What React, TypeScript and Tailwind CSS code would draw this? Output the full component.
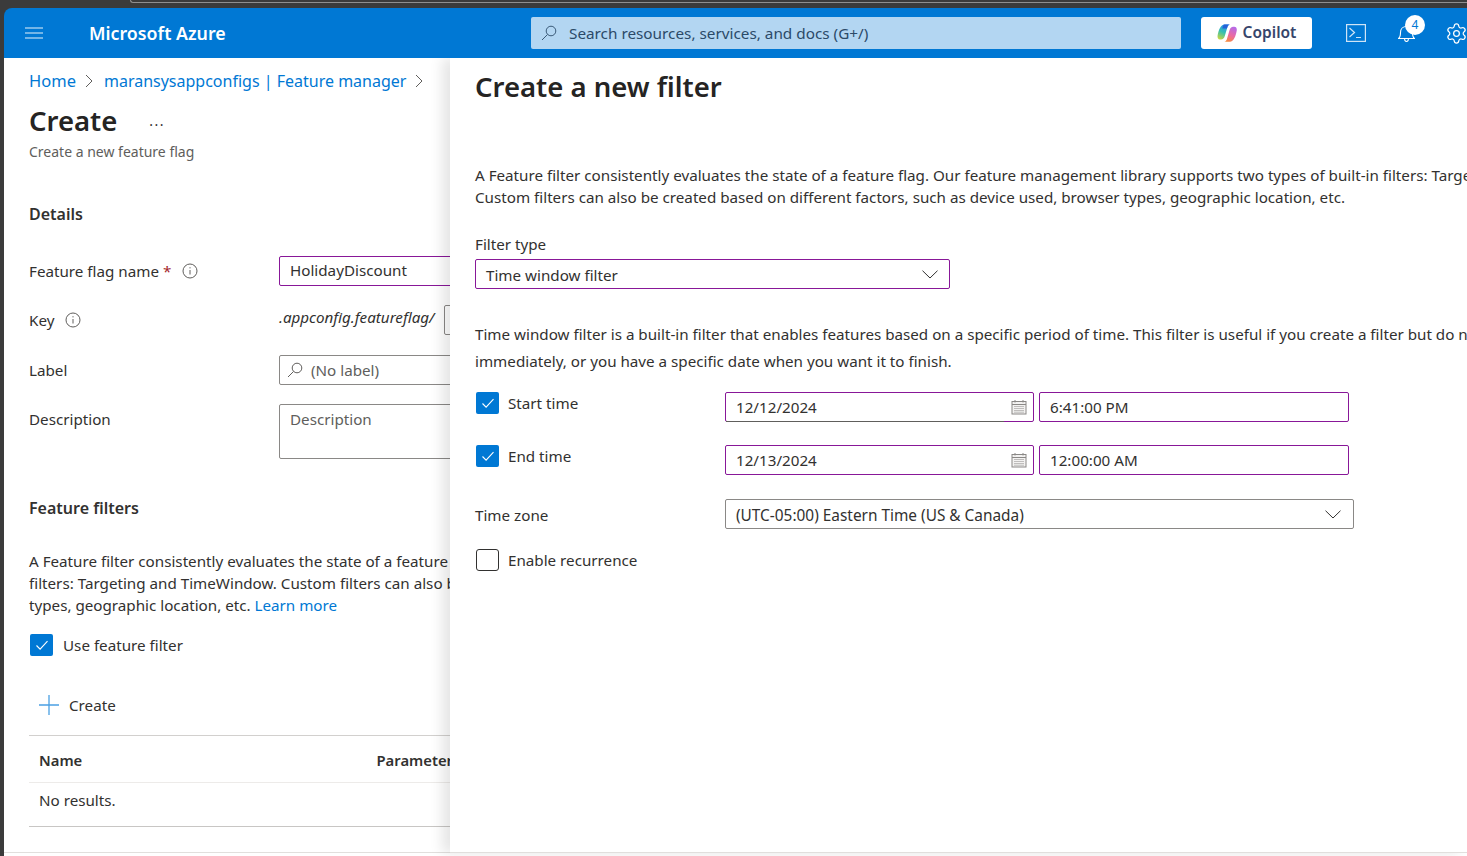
import React from "react";
import { Settings } from "lucide-react";

const Check = () => (
  <svg viewBox="0 0 16 16" className="w-[16px] h-[16px]" fill="none" stroke="#ffffff" strokeWidth="1.100">
    <path d="M2.500 8.500l3.600 3.600 7.400-8" />
  </svg>
);

const CheckBox = ({ checked = true }: { checked?: boolean }) => (
  <div
    className={
      checked
        ? "w-[23px] h-[22px] rounded-[2px] bg-[#0078d4] flex items-center justify-center shrink-0"
        : "w-[23px] h-[22px] rounded-[3px] border border-[#323130] bg-white shrink-0"
    }
  >
    {checked && <Check />}
  </div>
);

const Info = () => (
  <svg viewBox="0 0 16 16" className="w-[16px] h-[16px] shrink-0" fill="none" stroke="#605e5c" strokeWidth="1">
    <circle cx="8" cy="8" r="7" />
    <path d="M8 7v4.500M8 4.200v1.200" />
  </svg>
);

const Chevron = () => (
  <svg viewBox="0 0 16 9" className="w-[16px] h-[9px] shrink-0" fill="none" stroke="#323130" strokeWidth="1">
    <path d="M.5 .7L8 8l7.500-7.300" />
  </svg>
);

const Crumb = () => (
  <svg viewBox="0 0 8 14" className="w-[8px] h-[14px] shrink-0" fill="none" stroke="#605e5c" strokeWidth="1">
    <path d="M1 1l6 6-6 6" />
  </svg>
);

const Calendar = () => (
  <svg viewBox="0 0 16 16" className="w-[16px] h-[16px] shrink-0" fill="none" stroke="#8a8886" strokeWidth="1">
    <rect x="1" y="2.500" width="14" height="12.500" fill="#f3f2f1" />
    <path d="M1 5.500h14M4 1v2.500M12 1v2.500" />
    <path d="M3.500 7.500h9M3.500 9.500h9M3.500 11.500h9M3.500 13.200h9" strokeDasharray="1 1" />
  </svg>
);

const Row = ({ children, className }: { children: React.ReactNode; className: string }) => (
  <div className={"flex items-center whitespace-nowrap " + className}>{children}</div>
);

const Copilot = () => (
  <svg viewBox="0 0 20 20" className="w-[20px] h-[20px] shrink-0">
    <defs>
      <linearGradient id="cpa" x1="0.6" y1="0" x2="0.2" y2="1">
        <stop offset="0" stopColor="#2b8ff0" />
        <stop offset="0.5" stopColor="#35c0b0" />
        <stop offset="1" stopColor="#c8d63f" />
      </linearGradient>
      <linearGradient id="cpb" x1="0.7" y1="0" x2="0.3" y2="1">
        <stop offset="0" stopColor="#b56ae8" />
        <stop offset="0.55" stopColor="#ec6aa0" />
        <stop offset="1" stopColor="#f58a3c" />
      </linearGradient>
    </defs>
    <path d="M7.500 1.500H13c-1.500.3-2.200 1.300-2.700 3L7.800 13c-.7 2.200-1.800 3.500-3.800 3.500H3C1 16.500 .2 14.800.6 12.500 1.500 7 3.800 1.500 7.500 1.500z" fill="url(#cpa)" />
    <path d="M12.500 18.800H7.300c1.500-.3 2.200-1.300 2.700-3l2.500-8.500c.7-2.200 1.800-3.500 3.800-3.500h1c2 0 2.800 1.700 2.400 4-.9 5.500-3.200 11-6.700 11z" fill="url(#cpb)" />
    <path d="M7.500 1.500H13c-1.500.3-2.200 1.300-2.700 3l-.3 1H5.300c.5-2.200 1-4 2.200-4z" fill="#2563d8" />
  </svg>
);

export default function App() {
  return (
    <div
      className="w-[1467px] h-[856px] overflow-hidden bg-[#3b3b3b] pl-[4px] flex flex-col text-[15.2px] text-[#323130]"
      style={{ fontFamily: '"Noto Sans", "Open Sans", sans-serif' }}
    >
      <div className="h-[8px] shrink-0 pl-[126px]">
        <div className="h-[3px] border-b border-l border-[#8f8f8f] rounded-bl-[4px]" />
      </div>
      <header className="h-[50px] shrink-0 bg-[#0078d4] rounded-tl-[8px] flex items-center text-white overflow-hidden">
        <svg viewBox="0 0 18 12" className="w-[18px] h-[12px] ml-[21px] shrink-0" fill="none" stroke="#e6f1fa" strokeWidth="1.200">
          <path d="M0 1h18M0 6h18M0 11h18" />
        </svg>
        <div className="ml-[46px] w-[442px] shrink-0 text-[17.800px] font-semibold">Microsoft Azure</div>
        <div className="w-[650px] h-[32px] bg-[#b3d6f2] rounded-[2px] flex items-center pl-[10px] text-[#2b4a68] shrink-0">
          <svg viewBox="0 0 16 16" className="w-[16px] h-[16px] shrink-0" fill="none" stroke="#3a5a78" strokeWidth="1">
            <circle cx="10" cy="6" r="4.800" />
            <path d="M6.500 9.500L1 15" />
          </svg>
          <span className="ml-[12px] text-[15.300px]">Search resources, services, and docs (G+/)</span>
        </div>
        <div className="ml-[20px] w-[111px] h-[32px] bg-white rounded-[3px] flex items-center justify-center gap-[6px] shrink-0">
          <Copilot />
          <span className="text-[#36456b] text-[15.500px] font-semibold">Copilot</span>
        </div>
        <svg viewBox="0 0 20 18" className="ml-[34px] w-[20px] h-[18px] shrink-0" fill="none" stroke="#cfe4f6" strokeWidth="1.200">
          <rect x=".6" y=".6" width="18.800" height="16.800" />
          <path d="M3.500 4l5 4.500-5 4.500M10 13.500h5" />
        </svg>
        <div className="ml-[32px] w-[17px] h-[18px] relative shrink-0">
          <svg viewBox="0 0 17 18" className="w-[17px] h-[18px]" fill="none" stroke="#ffffff" strokeWidth="1.100">
            <path d="M.5 14.500c2-1.500 2-3 2-6C2.500 5 5 2.500 8.500 2.500s6 2.500 6 6c0 3 0 4.500 2 6zM6.500 14.500c0 1.800.8 3 2 3s2-1.200 2-3" />
          </svg>
          <div className="absolute left-[7px] top-[-9px] w-[20px] h-[20px] rounded-full bg-white text-[#0078d4] text-[12px] flex items-center justify-center">
            4
          </div>
        </div>
        <Settings className="ml-[30px] w-[23px] h-[23px] shrink-0 text-white" strokeWidth={1.300} />
      </header>

      <main className="flex-1 min-h-0 flex bg-white overflow-hidden">
        <section className="w-[446px] shrink-0 overflow-hidden pl-[25px] whitespace-nowrap">
          <Row className="h-[24px] mt-[11px] text-[#0078d4] gap-[9px] text-[16px]">
            <span className="text-[16.500px]">Home</span>
            <Crumb />
            <span className="ml-[2px]">maransysappconfigs | Feature manager</span>
            <Crumb />
          </Row>
          <Row className="h-[40px] mt-[8px] text-[#252423]">
            <span className="text-[27.500px] font-semibold">Create</span>
            <span className="ml-[32px] mt-[6px] text-[#323130] text-[14px] tracking-[1.500px]">···</span>
          </Row>
          <Row className="h-[20px] text-[14px] text-[#605e5c]">Create a new feature flag</Row>
          <Row className="h-[24px] mt-[41px] text-[16px] font-semibold">Details</Row>

          <Row className="h-[30px] mt-[30px]">
            <div className="w-[250px] shrink-0 flex items-center">
              <span>Feature flag name</span>
              <span className="text-[#a4262c] ml-[4px]">*</span>
              <span className="ml-[11px]"><Info /></span>
            </div>
            <div className="w-[220px] shrink-0 h-[30px] border border-[#881798] rounded-[2px] pl-[10px] flex items-center pb-[2px]">HolidayDiscount</div>
          </Row>
          <Row className="h-[30px] mt-[19px]">
            <div className="w-[250px] shrink-0 flex items-center">
              <span>Key</span>
              <span className="ml-[11px]"><Info /></span>
            </div>
            <i className="mb-[6px]">.appconfig.featureflag/</i>
            <div className="ml-[9px] w-[20px] h-[30px] border border-[#8a8886] rounded-[2px] shrink-0" />
          </Row>
          <Row className="h-[30px] mt-[20px]">
            <div className="w-[250px] shrink-0">Label</div>
            <div className="w-[220px] shrink-0 h-[30px] border border-[#8a8886] rounded-[2px] pl-[7px] flex items-center text-[#605e5c]">
              <svg viewBox="0 0 16 16" className="w-[16px] h-[16px] shrink-0" fill="none" stroke="#605e5c" strokeWidth="1">
                <circle cx="10" cy="6" r="4.800" />
                <path d="M6.500 9.500L1 15" />
              </svg>
              <span className="ml-[8px]">(No label)</span>
            </div>
          </Row>
          <div className="flex mt-[19px] h-[55px]">
            <div className="w-[250px] shrink-0 h-[30px] flex items-center">Description</div>
            <div className="w-[220px] shrink-0 h-[55px] border border-[#8a8886] rounded-[2px] pl-[10px] pt-[3px] text-[#605e5c]">Description</div>
          </div>
          <Row className="h-[24px] mt-[37px] text-[16px] font-semibold">Feature filters</Row>
          <div className="mt-[30px] w-[600px] leading-[22px]">
            <div>A Feature filter consistently evaluates the state of a feature flag. Our feature</div>
            <div>filters: Targeting and TimeWindow. Custom filters can also be created based</div>
            <div>types, geographic location, etc. <span className="text-[#0078d4]">Learn more</span></div>
          </div>
          <Row className="h-[22px] mt-[18px] pl-[1px]">
            <CheckBox />
            <span className="ml-[10px]">Use feature filter</span>
          </Row>
          <Row className="h-[24px] mt-[37px] pl-[10px]">
            <svg viewBox="0 0 20 20" className="w-[20px] h-[20px] shrink-0" fill="none" stroke="#4ba0e3" strokeWidth="1.300">
              <path d="M10 0v20M0 10h20" />
            </svg>
            <span className="ml-[10px]">Create</span>
          </Row>
          <div className="mt-[18px] w-[600px] border-t border-[#d2d0ce] h-[47px] flex items-center pl-[10px] font-semibold text-[14.800px] pt-[2px]">
            <span className="w-[337.500px] shrink-0">Name</span>
            <span>Parameters</span>
          </div>
          <div className="w-[600px] border-t border-[#edebe9] border-b-[#c8c6c4] border-b h-[45px] flex items-center pl-[10px] pb-[8px]">No results.</div>
          <div className="w-[600px] mt-[25px] -ml-[25px] border-t border-[#e1dfdd]" />
        </section>

        <section className="flex-1 min-w-0 overflow-hidden pl-[25px] whitespace-nowrap relative shadow-[-8px_0_12px_rgba(0,0,0,0.1)] border-b border-[#e1dfdd] h-[795px]">
          <Row className="h-[40px] mt-[9px] text-[27.500px] font-semibold text-[#252423]">Create a new filter</Row>
          <div className="mt-[57px] leading-[22px]">
            <div>A Feature filter consistently evaluates the state of a feature flag. Our feature management library supports two types of built-in filters: Targeting and TimeWindow.</div>
            <div>Custom filters can also be created based on different factors, such as device used, browser types, geographic location, etc.</div>
          </div>
          <Row className="h-[20px] mt-[26px]">Filter type</Row>
          <div className="mt-[5px] w-[475px] h-[30px] border border-[#881798] rounded-[2px] pl-[10px] pr-[11px] flex items-center justify-between">
            <span className="mt-[2px]">Time window filter</span>
            <Chevron />
          </div>
          <div className="mt-[32px] leading-[27px]">
            <div>Time window filter is a built-in filter that enables features based on a specific period of time. This filter is useful if you create a filter but do not want to enable it</div>
            <div>immediately, or you have a specific date when you want it to finish.</div>
          </div>
          <div className="mt-[17px] flex h-[30px]">
            <div className="w-[250px] shrink-0 flex pl-[1px]">
              <CheckBox />
              <span className="ml-[9px] leading-[22px]">Start time</span>
            </div>
            <div className="relative w-[309px] h-[30px] border border-[#881798] rounded-[2px] pl-[10px] pr-[6px] flex items-center justify-between">
              <span>12/12/2024</span>
              <Calendar />
              <div className="absolute left-0 bottom-[-1px] w-[278px] h-[1px] bg-[#605e5c]" />
            </div>
            <div className="ml-[5px] w-[310px] h-[30px] border border-[#881798] rounded-[2px] pl-[10px] flex items-center">6:41:00 PM</div>
          </div>
          <div className="mt-[23px] flex h-[30px]">
            <div className="w-[250px] shrink-0 flex pl-[1px]">
              <CheckBox />
              <span className="ml-[9px] leading-[22px]">End time</span>
            </div>
            <div className="w-[309px] h-[30px] border border-[#881798] rounded-[2px] pl-[10px] pr-[6px] flex items-center justify-between">
              <span>12/13/2024</span>
              <Calendar />
            </div>
            <div className="ml-[5px] w-[310px] h-[30px] border border-[#881798] rounded-[2px] pl-[10px] flex items-center">12:00:00 AM</div>
          </div>
          <Row className="mt-[24px] h-[30px]">
            <div className="w-[250px] shrink-0 mt-[2px]">Time zone</div>
            <div className="w-[629px] h-[30px] border border-[#8a8886] rounded-[2px] pl-[10px] pr-[12px] flex items-center justify-between">
              <span className="text-[15.400px] mt-[3px]">(UTC-05:00) Eastern Time (US &amp; Canada)</span>
              <Chevron />
            </div>
          </Row>
          <Row className="mt-[20px] h-[22px] pl-[1px]">
            <CheckBox checked={false} />
            <span className="ml-[9px]">Enable recurrence</span>
          </Row>
        </section>
      </main>
    </div>
  );
}
